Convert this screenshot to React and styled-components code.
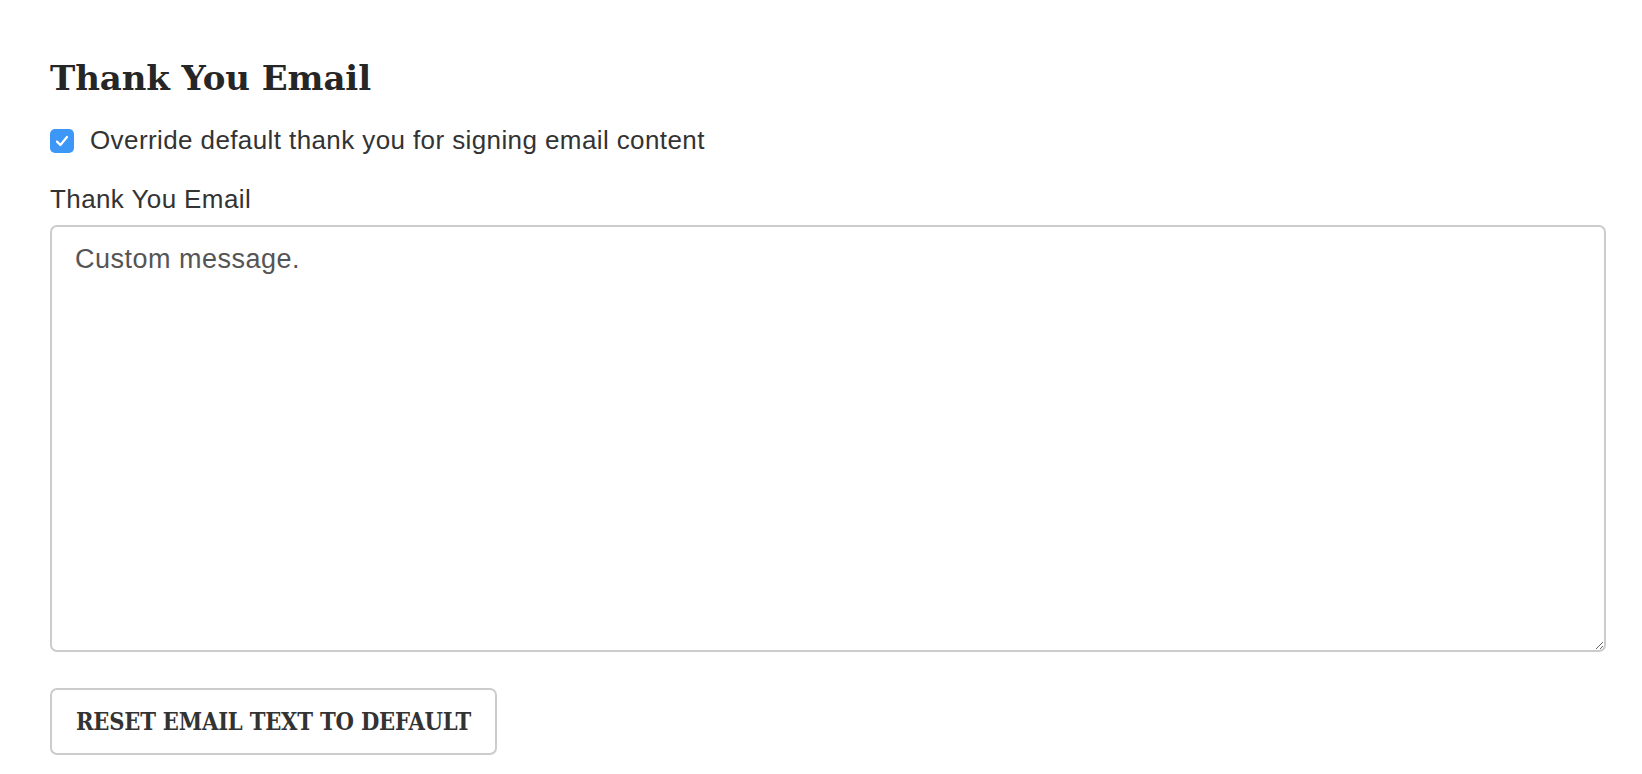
import React from "react";
import styled, { createGlobalStyle } from "styled-components";

const Global = createGlobalStyle`
  html, body { margin: 0; padding: 0; background: #fff; }
  body { font-family: "Liberation Sans", Arial, sans-serif; color: #333; }
`;

const Page = styled.div`
  padding: 57px 36px 0 50px;
  display: flex;
  flex-direction: column;
  align-items: stretch;
`;

const Heading = styled.h2`
  margin: 0;
  font-family: "DejaVu Serif", serif;
  font-weight: bold;
  font-size: 34px;
  line-height: 42px;
  color: #262626;
  letter-spacing: -0.1px;
`;

const CheckRow = styled.label`
  margin-top: 26px;
  display: flex;
  align-items: flex-start;
  gap: 16px;
  font-size: 26px;
  letter-spacing: 0.4px;
  line-height: 30px;
  color: #333;
  cursor: pointer;
`;

const Box = styled.span`
  flex: none;
  width: 24px;
  height: 24px;
  margin-top: 4px;
  border-radius: 5px;
  background: ${(p) => (p.$checked ? "#3d97f6" : "#fff")};
  display: flex;
  align-items: center;
  justify-content: center;
`;

const Label = styled.div`
  margin-top: 29px;
  font-size: 26px;
  letter-spacing: 0.4px;
  line-height: 30px;
  color: #333;
`;

const TextArea = styled.textarea`
  margin-top: 11px;
  box-sizing: border-box;
  width: 1556px;
  height: 427px;
  border: 2px solid #cccccc;
  border-radius: 7px;
  padding: 14px 23px 11px;
  font-family: "Liberation Sans", Arial, sans-serif;
  font-size: 27px;
  letter-spacing: 0.5px;
  line-height: 36px;
  color: #555;
  background: #fff;
  outline: none;
  resize: vertical;
`;

const Button = styled.button`
  margin-top: 36px;
  align-self: flex-start;
  box-sizing: border-box;
  width: 447px;
  height: 67px;
  border: 2px solid #cccccc;
  border-radius: 7px;
  background: #fff;
  font-family: "DejaVu Serif Condensed", "DejaVu Serif", serif;
  font-stretch: condensed;
  font-weight: bold;
  font-size: 23.5px;
  color: #333;
  letter-spacing: -0.2px;
  text-transform: uppercase;
  padding: 0;
  cursor: pointer;
`;

export default function App() {
  return (
    <>
      <Global />
      <Page>
        <Heading>Thank You Email</Heading>
        <CheckRow>
          <Box $checked>
            <svg width="16" height="16" viewBox="0 0 16 16">
              <path d="M3 8.6 L6.4 12 L13 4" fill="none" stroke="#fff" strokeWidth="2.2" strokeLinecap="round" strokeLinejoin="round" />
            </svg>
          </Box>
          Override default thank you for signing email content
        </CheckRow>
        <Label>Thank You Email</Label>
        <TextArea defaultValue="Custom message." />
        <Button>Reset Email Text to Default</Button>
      </Page>
    </>
  );
}
